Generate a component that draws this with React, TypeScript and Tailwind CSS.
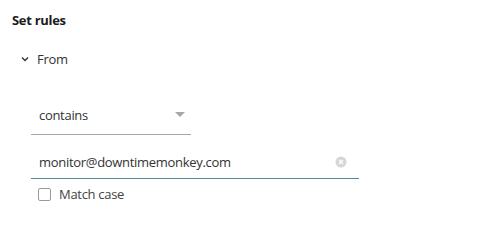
import React from "react";

const font = { fontFamily: '"Open Sans", "Noto Sans", Arial, sans-serif' };

function ChevronDown() {
  return (
    <svg width="8" height="6" viewBox="0 0 8 6" className="shrink-0">
      <path d="M1 1.5 L4 4.5 L7 1.5" fill="none" stroke="#333" strokeWidth="1.4" />
    </svg>
  );
}

function ClearIcon() {
  return (
    <svg width="12" height="12" viewBox="0 0 12 12" className="shrink-0">
      <circle cx="6" cy="6" r="5.5" fill="#d6d6d6" />
      <path d="M4 4 L8 8 M8 4 L4 8" stroke="#fff" strokeWidth="1.3" />
    </svg>
  );
}

export default function App() {
  return (
    <div className="w-[500px] h-[217px] bg-white overflow-hidden tracking-[-0.3px]" style={font}>
      {/* Heading */}
      <div className="pl-[12px] pt-[11px] text-[13px] leading-[18px] font-bold text-[#1b1b1b]">
        Set rules
      </div>

      {/* Collapsible section */}
      <div className="mt-[21px] pl-[21px] flex items-center gap-[8px] text-[13px] leading-[18px] text-[#333]">
        <ChevronDown />
        <span>From</span>
      </div>

      <div className="pl-[31px]">
        {/* Operator select */}
        <div className="mt-[38px] w-[160px] flex items-center justify-between pl-[8px] pr-[6px] pb-[10px] border-b border-[#a6a6a6] text-[13px] leading-[18px] text-[#333]">
          <span>contains</span>
          <svg width="10" height="5" viewBox="0 0 10 5" className="mb-[1px]">
            <path d="M0 0 L10 0 L5 5 Z" fill="#a6a6a6" />
          </svg>
        </div>

        {/* Value input */}
        <div className="mt-[18px] w-[328px] flex items-center justify-between pl-[8px] pr-[12px] pb-[7px] border-b border-[#4a8c9e] text-[13px] leading-[18px] text-[#333]">
          <span>monitor@downtimemonkey.com</span>
          <ClearIcon />
        </div>

        {/* Match case */}
        <label className="mt-[8px] ml-[7px] flex items-center gap-[8px] text-[13px] leading-[14px] text-[#444]">
          <span className="w-[13px] h-[13px] rounded-[2px] border border-[#9a9a9a] bg-white" />
          <span>Match case</span>
        </label>
      </div>
    </div>
  );
}
